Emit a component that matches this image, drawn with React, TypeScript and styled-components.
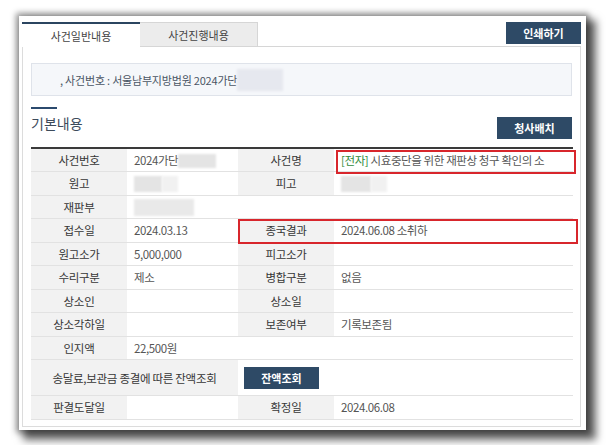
import React from 'react'
import styled, { createGlobalStyle } from 'styled-components'

const GlobalStyle = createGlobalStyle`
    html, body {
        margin: 0;
        padding: 0;
        background: #ffffff;
        font-family: 'Noto Sans CJK KR', 'Noto Sans', sans-serif;
    }
`

const Page = styled.div`
    width: 606px;
    height: 445px;
    padding: 16px 0 0 19px;
    box-sizing: border-box;
    background: #ffffff;
`

const Frame = styled.div`
    width: 567px;
    height: 414px;
    box-sizing: border-box;
    padding: 6px 5px 3px 3px;
    background: #ffffff;
    display: flex;
    flex-direction: column;
    box-shadow: 0 0 6px 3px rgba(0, 0, 0, 0.4), 7px 7px 8px 3px rgba(0, 0, 0, 0.6);
`

const TabBar = styled.div`
    display: flex;
    align-items: flex-end;
    height: 25px;
`

const Tab = styled.div<{ $active?: boolean }>`
    width: 118px;
    height: 25px;
    box-sizing: border-box;
    display: flex;
    align-items: center;
    justify-content: center;
    font-size: 11px;
    color: #444;
    background: ${p => (p.$active ? '#ffffff' : '#ececec')};
    border-top: ${p => (p.$active ? '2px solid #2b4560' : '1px solid #d6d6d6')};
    border-right: ${p => (p.$active ? 'none' : '1px solid #d6d6d6')};
    border-bottom: ${p => (p.$active ? 'none' : '1px solid #d6d6d6')};
`

const TabFill = styled.div`
    flex: 1;
    height: 25px;
    display: flex;
    justify-content: flex-end;
    align-items: flex-start;
    border-bottom: 1px solid #d6d6d6;
    box-sizing: border-box;
`

const DarkButton = styled.button<{ $w?: number; $top?: number }>`
    width: ${p => p.$w ?? 75}px;
    height: 22px;
    border: none;
    margin: ${p => p.$top ?? 0}px 0 0 0;
    padding: 0;
    background: #2e4a66;
    color: #ffffff;
    font-family: 'Noto Sans CJK KR', 'Noto Sans', sans-serif;
    font-size: 11px;
    font-weight: bold;
    display: flex;
    align-items: center;
    justify-content: center;
`

const Panel = styled.div`
    flex: 1;
    border: 1px solid #dcdcdc;
    border-top: none;
    padding: 16px 8px 0 8px;
    display: flex;
    flex-direction: column;
`

const InfoBox = styled.div`
    height: 33px;
    box-sizing: border-box;
    background: #f5f7fa;
    border: 1px solid #dfe3ea;
    display: flex;
    align-items: center;
    padding-left: 28px;
    font-size: 11px;
    letter-spacing: -0.2px;
    color: #4a5564;
`

const Blur = styled.span<{ $w: number; $h?: number; $tone?: string }>`
    display: inline-block;
    width: ${p => p.$w}px;
    height: ${p => p.$h ?? 16}px;
    background: ${p => p.$tone ?? '#e4e4e4'};
    filter: blur(1px);
    vertical-align: middle;
`

const SectionHead = styled.div`
    display: flex;
    justify-content: space-between;
    align-items: flex-start;
    margin-top: 11px;
    margin-bottom: 8px;
`

const TitleBlock = styled.div`
    display: flex;
    flex-direction: column;
`

const TitleLine = styled.div`
    width: 26px;
    height: 2px;
    background: #2b4a6e;
`

const Title = styled.h2`
    margin: 4px 0 0 0;
    font-size: 14px;
    font-weight: normal;
    color: #3c4a5a;
    line-height: 20px;
`

const TableWrap = styled.div`
    position: relative;
`

const Table = styled.table`
    width: 542px;
    border-collapse: collapse;
    table-layout: fixed;
    border-top: 2px solid #3a3a3a;
    font-size: 11.5px;
`

const Row = styled.tr<{ $h?: number }>`
    height: ${p => p.$h ?? 23.5}px;
    border-bottom: 1px solid #e2e2e2;
`

const Label = styled.td`
    background: #f2f2f2;
    color: #363636;
    text-align: center;
    padding: 0;
    letter-spacing: -0.3px;
    white-space: nowrap;
`

const Value = styled.td<{ $pad?: number }>`
    color: #555;
    padding: 0 0 0 ${p => p.$pad ?? 7}px;
    white-space: nowrap;
    letter-spacing: -0.4px;
`

const Green = styled.span`
    color: #2f8a3a;
`

const Highlight = styled.div`
    position: absolute;
    border: 2px solid #d8262c;
    box-sizing: border-box;
    pointer-events: none;
`

export default function App() {
    return (
        <Page>
            <GlobalStyle />
            <Frame>
                <TabBar>
                    <Tab $active>사건일반내용</Tab>
                    <Tab>사건진행내용</Tab>
                    <TabFill>
                        <DarkButton $w={75}>인쇄하기</DarkButton>
                    </TabFill>
                </TabBar>
                <Panel>
                    <InfoBox>
                        ,&nbsp;사건번호 : 서울남부지방법원 2024가단<Blur $w={46} $h={22} $tone="#e6e8ef" />
                    </InfoBox>
                    <SectionHead>
                        <TitleBlock>
                            <TitleLine />
                            <Title>기본내용</Title>
                        </TitleBlock>
                        <DarkButton $w={75} $top={10}>청사배치</DarkButton>
                    </SectionHead>
                    <TableWrap>
                        <Table>
                            <colgroup>
                                <col style={{ width: 96 }} />
                                <col style={{ width: 111 }} />
                                <col style={{ width: 96 }} />
                                <col style={{ width: 239 }} />
                            </colgroup>
                            <tbody>
                                <Row>
                                    <Label>사건번호</Label>
                                    <Value>2024가단<Blur $w={38} $h={14} /></Value>
                                    <Label>사건명</Label>
                                    <Value><Green>[전자]</Green> 시효중단을 위한 재판상 청구 확인의 소</Value>
                                </Row>
                                <Row>
                                    <Label>원고</Label>
                                    <Value><Blur $w={28} /><Blur $w={16} $tone="#f1f1f1" /></Value>
                                    <Label>피고</Label>
                                    <Value><Blur $w={30} /><Blur $w={16} $tone="#f1f1f1" /></Value>
                                </Row>
                                <Row>
                                    <Label>재판부</Label>
                                    <Value colSpan={3}><Blur $w={60} $h={17} $tone="#e9e9e9" /></Value>
                                </Row>
                                <Row>
                                    <Label>접수일</Label>
                                    <Value>2024.03.13</Value>
                                    <Label>종국결과</Label>
                                    <Value>2024.06.08 소취하</Value>
                                </Row>
                                <Row>
                                    <Label>원고소가</Label>
                                    <Value>5,000,000</Value>
                                    <Label>피고소가</Label>
                                    <Value></Value>
                                </Row>
                                <Row>
                                    <Label>수리구분</Label>
                                    <Value>제소</Value>
                                    <Label>병합구분</Label>
                                    <Value>없음</Value>
                                </Row>
                                <Row>
                                    <Label>상소인</Label>
                                    <Value></Value>
                                    <Label>상소일</Label>
                                    <Value></Value>
                                </Row>
                                <Row>
                                    <Label>상소각하일</Label>
                                    <Value></Value>
                                    <Label>보존여부</Label>
                                    <Value>기록보존됨</Value>
                                </Row>
                                <Row>
                                    <Label>인지액</Label>
                                    <Value colSpan={3}>22,500원</Value>
                                </Row>
                                <Row $h={36}>
                                    <Label colSpan={2}>송달료,보관금 종결에 따른 잔액조회</Label>
                                    <Value colSpan={2} $pad={6}>
                                        <DarkButton $w={75}>잔액조회</DarkButton>
                                    </Value>
                                </Row>
                                <Row>
                                    <Label>판결도달일</Label>
                                    <Value></Value>
                                    <Label>확정일</Label>
                                    <Value>2024.06.08</Value>
                                </Row>
                            </tbody>
                        </Table>
                        <Highlight style={{ left: 305, top: 3, width: 240, height: 24 }} />
                        <Highlight style={{ left: 207, top: 72, width: 340, height: 25 }} />
                    </TableWrap>
                </Panel>
            </Frame>
        </Page>
    )
}
